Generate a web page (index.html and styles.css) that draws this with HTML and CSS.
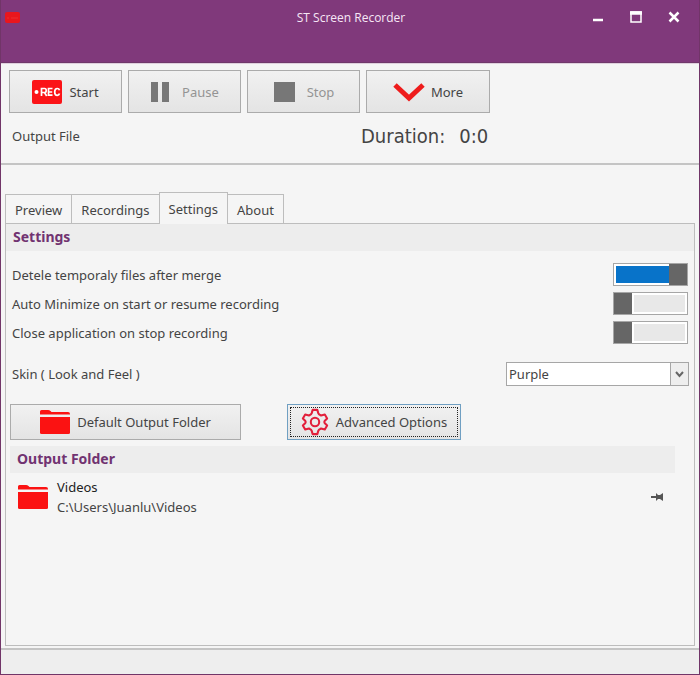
FILE: index.html
```html
<!DOCTYPE html>
<html lang="en">
<head>
<meta charset="utf-8">
<title>ST Screen Recorder</title>
<link rel="stylesheet" href="styles.css">
</head>
<body>
<svg class="defs" aria-hidden="true">
  <symbol id="folder" viewBox="0 0 30 26">
    <path d="M0 5.500V2.500Q0 1 1.500 1H8q1.500 0 2.500 1l1 1H28q2 0 2 2v.5z"/>
    <path d="M0 8H30V23.500q0 1.500-1.500 1.500h-27Q0 25 0 23.500z"/>
  </symbol>
</svg>
<div class="window">
  <header class="titlebar">
    <svg class="app-icon" width="17" height="12" viewBox="0 0 17 12" aria-hidden="true"><rect x="1" width="15" height="11" rx="2" fill="#e9161d"/><path d="M3 6h2M7 6h7" stroke="#ea2227" stroke-width="2"/></svg>
    <h1 class="title">ST Screen Recorder</h1>
    <div class="window-controls">
      <button type="button" aria-label="Minimize"><svg width="12" height="12" viewBox="0 0 12 12"><path d="M1 9h10" stroke="#fff" stroke-width="2.500"/></svg></button>
      <button type="button" aria-label="Maximize"><svg width="12" height="12" viewBox="0 0 12 12"><path d="M1 1h10v10H1z" fill="none" stroke="#fff" stroke-width="1.500"/><path d="M0 2h12" stroke="#fff" stroke-width="3.500"/></svg></button>
      <button type="button" aria-label="Close"><svg width="12" height="12" viewBox="0 0 12 12"><path d="M1.500 1.500l9 9m0-9l-9 9" stroke="#fff" stroke-width="2.500"/></svg></button>
    </div>
  </header>
  <section class="recorder">
    <div class="toolbar">
      <button type="button" class="button"><svg width="30" height="24" viewBox="0 0 30 24" aria-hidden="true"><rect width="30" height="24" rx="2" fill="#fb1317"/><circle cx="4.500" cy="12" r="2" fill="#fff"/><g fill="none" stroke="#fff" stroke-width="1.700"><path d="M9.500 16V8.500h3.200q1.500 0 1.500 2t-1.500 2H9.500m3 0l2.200 3.500M20.500 8.500h-4v6.700h4M16.500 12h3.700M27.500 10.200q-.5-1.700-2.200-1.700-2.600 0-2.600 3.400t2.600 3.400q1.700 0 2.200-1.700"/></g></svg><span>Start</span></button>
      <button type="button" class="button wide-gap" disabled><svg width="20" height="22" viewBox="0 0 20 22" aria-hidden="true"><path d="M1 1h7v20H1zM12 1h7v20h-7z" fill="#777"/></svg><span>Pause</span></button>
      <button type="button" class="button wide-gap" disabled><svg width="22" height="22" viewBox="0 0 22 22" aria-hidden="true"><path d="M1 1h21v20H1z" fill="#777"/></svg><span>Stop</span></button>
      <button type="button" class="button more"><svg width="32" height="22" viewBox="0 0 32 22" aria-hidden="true"><path d="M2 4l14 13L30 4" fill="none" stroke="#ee1c1c" stroke-width="5"/></svg><span>More</span></button>
    </div>
    <div class="status">
      <span>Output File</span>
      <output class="duration"><span>Duration:</span><span>0:0</span></output>
    </div>
  </section>
  <main class="workspace">
    <div class="tabs" role="tablist">
      <button type="button" role="tab" aria-selected="false">Preview</button>
      <button type="button" role="tab" aria-selected="false">Recordings</button>
      <button type="button" role="tab" aria-selected="true" aria-controls="settings">Settings</button>
      <button type="button" role="tab" aria-selected="false">About</button>
    </div>
    <section class="panel" id="settings" role="tabpanel">
      <h2 class="heading">Settings</h2>
      <div class="options">
        <div class="option"><label for="merge">Detele temporaly files after merge</label><input class="switch" id="merge" type="checkbox" role="switch" checked></div>
        <div class="option"><label for="minimize">Auto Minimize on start or resume recording</label><input class="switch" id="minimize" type="checkbox" role="switch"></div>
        <div class="option"><label for="close">Close application on stop recording</label><input class="switch" id="close" type="checkbox" role="switch"></div>
      </div>
      <div class="option skin">
        <label for="skin">Skin ( Look and Feel )</label>
        <div class="select-box">
          <select id="skin"><option>Purple</option></select>
          <svg width="17" height="22" viewBox="0 0 17 22" aria-hidden="true"><path d="M5 9l3.500 4L12 9" fill="none" stroke="#666" stroke-width="2"/></svg>
        </div>
      </div>
      <div class="actions">
        <button type="button" class="button folder-button"><svg class="folder" width="30" height="26" aria-hidden="true"><use href="#folder"/></svg><span>Default Output Folder</span></button>
        <button type="button" class="button advanced"><svg width="28" height="28" viewBox="0 0 28 30" aria-hidden="true"><g fill="none" stroke="#e2203b" stroke-width="2.200"><circle cx="14" cy="15" r="4.500"/><path stroke-linejoin="round" d="M11.500 2h5l1 3.500q.5 1.500 2 2l1 .5 4-1 2.500 4.300-2.700 2.700q-.7 1 0 2l2.700 2.700-2.500 4.300-4-1-1 .5q-1.500.5-2 2l-1 3.500h-5l-1-3.500q-.5-1.500-2-2l-1-.5-4 1L1 18.700 3.700 16q.7-1 0-2L1 11.300 3.500 7l4 1 1-.5q1.500-.5 2-2z"/></g></svg><span>Advanced Options</span></button>
      </div>
      <h3 class="heading output-heading">Output Folder</h3>
      <div class="location">
        <svg class="folder" width="30" height="26" aria-hidden="true"><use href="#folder"/></svg>
        <div class="location-text"><strong>Videos</strong><span>C:\Users\Juanlu\Videos</span></div>
        <button type="button" class="pin" aria-label="Pin folder"><svg width="12" height="10" viewBox="0 0 12 10"><path d="M0 4h5V1l2 2h2l3-2v8L9 7H7L5 9V6H0z" fill="#555"/></svg></button>
      </div>
    </section>
  </main>
  <footer class="statusbar"></footer>
</div>
</body>
</html>
```
FILE: styles.css
```css
* {
  box-sizing: border-box;
}

body {
  margin: 0;
  color: #444;
  font: 13px/20px "Noto Sans", sans-serif;
}

button,
select {
  color: inherit;
  font: inherit;
}

h1,
h2,
h3 {
  margin: 0;
}

svg {
  flex: none;
  display: block;
}

.defs {
  position: absolute;
  width: 0;
  height: 0;
}

.window {
  display: flex;
  flex-direction: column;
  min-height: 100vh;
  border: 1px solid #713568;
  border-top: 0;
  background: #f5f5f5;
}

.titlebar {
  display: grid;
  grid-template-columns: 1fr auto 1fr;
  align-items: start;
  padding: 8px 19px 34px 3px;
  border-bottom: 1px solid #70386b;
  background: #80397b;
}

.app-icon {
  margin-top: 4px;
}

.title {
  padding-left: 18px;
  color: #f7e7f6;
  font: 12px/20px "Open Sans", sans-serif;
}

.window-controls {
  display: flex;
  justify-content: flex-end;
  gap: 26px;
  margin-top: 3px;
}

.window-controls button,
.pin {
  padding: 0;
  border: 0;
  background: none;
}

.recorder {
  padding: 6px 8px 14px;
  border-top: 1px solid #dfcfdd;
  border-bottom: 2px solid #c4c4c4;
}

.toolbar {
  display: flex;
  gap: 6px;
}

.button {
  display: flex;
  align-items: center;
  justify-content: center;
  gap: 7px;
  width: 113px;
  height: 43px;
  padding: 0;
  border: 1px solid #ababab;
  background: linear-gradient(#f1f1f1, #e4e4e4);
}

.button:disabled {
  color: #949494;
}

.wide-gap {
  gap: 12px;
}

.more {
  gap: 6px;
  width: 124px;
}

.status {
  display: grid;
  grid-template-columns: 349px 1fr;
  align-items: center;
  padding: 10px 0 0 3px;
}

.duration {
  display: flex;
  gap: 14px;
  font-family: "DejaVu Sans Condensed", "DejaVu Sans", sans-serif;
  font-size: 20px;
  line-height: 26px;
}

.workspace {
  display: flex;
  flex: 1;
  flex-direction: column;
  padding: 27px 4px 2px;
}

.tabs {
  display: flex;
  align-items: flex-end;
}

.tabs button {
  height: 29px;
  margin-right: -1px;
  padding: 2px 9px 0;
  border: 1px solid #bdbdbd;
  border-bottom: 0;
  background: #f5f5f5;
}

.tabs [aria-selected="true"] {
  z-index: 1;
  height: 32px;
  margin-bottom: -1px;
  padding-bottom: 1px;
}

.panel {
  flex: 1;
  border: 1px solid #bdbdbd;
}

.heading {
  padding: 3px 7px 4px;
  background: #ededed;
  color: #713371;
  font-size: 14px;
  line-height: 20px;
}

.options {
  display: grid;
  gap: 6px;
  padding: 12px 6px 0;
}

.option {
  display: flex;
  align-items: center;
  justify-content: space-between;
}

.switch {
  display: flex;
  width: 75px;
  height: 23px;
  margin: 0;
  border: 1px solid #a6a6a6;
  appearance: none;
  background: #fff;
}

.switch::before {
  width: 18px;
  background: #666;
  content: "";
}

.switch::after {
  flex: 1;
  margin: 2px;
  background: #e8e8e8;
  content: "";
}

.switch:checked {
  flex-direction: row-reverse;
}

.switch:checked::after {
  margin-right: 0;
  background: #0873c9;
}

.skin {
  padding: 18px 5px 0 6px;
}

.select-box {
  display: grid;
  grid-template-columns: 1fr 18px;
  width: 183px;
  height: 24px;
  border: 1px solid #a6a6a6;
  background: #fff;
}

.select-box select {
  grid-area: 1 / 1 / 2 / 3;
  width: 100%;
  padding: 0 2px;
  border: 0;
  appearance: none;
  background: none;
}

.select-box svg {
  grid-area: 1 / 2;
  width: 18px;
  border-left: 1px solid #a6a6a6;
  background: #eee;
  pointer-events: none;
}

.actions {
  display: flex;
  gap: 46px;
  padding: 18px 4px 6px;
}

.actions .button {
  height: 36px;
}

.actions .folder-button {
  width: 231px;
}

.actions .advanced {
  gap: 7px;
  width: 174px;
  border: 1px solid #6f9fc2;
  outline: 1px dotted #222;
  outline-offset: -4px;
}

.folder {
  fill: #fb1212;
}

.output-heading {
  margin: 0 19px 0 4px;
}

.location {
  display: flex;
  align-items: center;
  gap: 9px;
  padding: 4px 31px 6px 12px;
}

.location-text {
  display: grid;
  flex: 1;
}

.location-text strong {
  color: #222;
  font-weight: normal;
}

.statusbar {
  height: 26px;
  border-top: 2px solid #c4c4c4;
  background: #eee;
}
```
